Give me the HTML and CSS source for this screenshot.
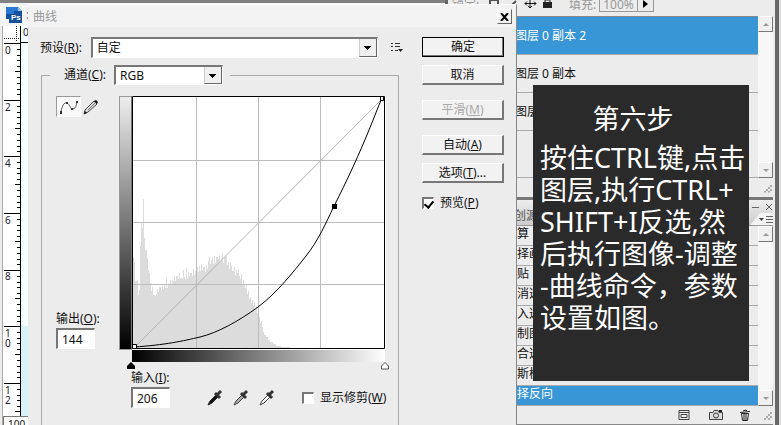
FILE: index.html
```
<!DOCTYPE html>
<html lang="zh-CN">
<head>
<meta charset="utf-8">
<title>曲线</title>
<link rel="stylesheet" href="styles.css">
</head>
<body>
<main class="workspace">
  <section class="document">
    <header class="doc-title">
      <svg width="17" height="17" viewBox="0 0 17 17"><path d="M0 0h12l4 4v12H3v-4H0z" fill="#164f9c"/><path d="M0 0h12v4H8v3H0z" fill="#2b78d2"/><path d="M12 0l4 4h-4z" fill="#9cc9ef"/><text x="5" y="13" class="ps">Ps</text></svg>
      <span>:</span>
    </header>
    <div class="doc-body">
      <svg class="ruler" width="28" height="390" viewBox="0 0 28 390">
        <defs>
          <path id="ticks" d="M4 .5h17M17 6.5h4M17 12.5h4M17 17.5h4M17 23.5h4M15 28.5h6M17 34.5h4M17 40.5h4M17 46.5h4M17 51.5h4" stroke="#000"/>
        </defs>
        <path d="M21 0h7v390h-7z" fill="#f5feff"/>
        <path d="M21 300h7v90h-7z" fill="#d9f2f5"/>
        <path d="M16.500 0v16M4 12.500h16" stroke="#222" stroke-dasharray="1 1"/>
        <path d="M20.500 0v390M20 16.500h8" stroke="#000"/>
        <use href="#ticks" y="17"/><use href="#ticks" y="74"/><use href="#ticks" y="130"/><use href="#ticks" y="187"/><use href="#ticks" y="244"/><use href="#ticks" y="300"/><use href="#ticks" y="357"/>
        <g class="ruler-text">
          <text x="23" y="10">0</text><text x="5" y="28">0</text><text x="5" y="85">2</text><text x="5" y="141">4</text><text x="5" y="198">6</text><text x="5" y="254">8</text>
          <text x="5" y="311">1</text><text x="5" y="321">0</text><text x="5" y="368">1</text><text x="5" y="378">2</text>
        </g>
      </svg>
      <div class="zoom-level">100</div>
    </div>
  </section>

  <aside class="panels">
    <section class="layers">
      <div class="layer-tools">
        <span>锁定:</span>
        <svg width="64" height="12" viewBox="0 0 64 12"><path d="M1 0h8v8H1zM20 8l7-7" fill="none" stroke="#555" stroke-width="2"/><path d="M41 0v8M36 3.500h11M39 6l2 2 2-2M38 1.500l-2 2 2 2M45 1.500l2 2-2 2" fill="none" stroke="#111"/><path d="M54 2h9v6h-9z" fill="#222"/><path d="M56 2V0h5v2" fill="none" stroke="#222"/></svg>
        <span class="fill-label">填充:</span>
        <span class="fill-value">100%</span><span class="fill-arrow"></span>
      </div>
      <div class="scroll-area">
        <ul class="layer-list">
          <li class="selected">图层 0 副本 2</li>
          <li>图层 0 副本</li>
          <li>图层 0</li>
          <li></li>
        </ul>
        <div class="scrollbar"><i class="arrow up"></i><i class="arrow down"></i></div>
      </div>
      <div class="panel-foot"><i class="grip"></i></div>
    </section>
    <section class="history">
      <header class="tabs">
        <span class="tab">创源</span>
        <svg width="22" height="23" viewBox="0 0 22 23"><path d="M0 22L9 11h13v12H0z" fill="#f4f4f4"/><path d="M1 5.500h7M15 2l6 6M21 2l-6 6M15 14.500h7M15 17.500h7M15 20.500h7" stroke="#666"/><path d="M8 16h5l-2.500 3z" fill="#444"/></svg>
      </header>
      <div class="scroll-area">
        <ul class="history-list">
          <li>算</li><li>择画</li><li>贴</li><li>消选</li><li>入选</li><li>制图</li><li>合选</li><li>斯模</li><li class="selected">择反向</li>
        </ul>
        <div class="scrollbar"><i class="arrow up"></i><i class="arrow down"></i></div>
      </div>
      <footer class="panel-foot actions">
        <svg width="12" height="12" viewBox="0 0 12 12"><path d="M1 1.500h10v9H1zM3 5.500h6v3H3zM1 3.500h10" fill="none" stroke="#444"/></svg>
        <svg width="14" height="12" viewBox="0 0 14 12"><path d="M.5 3.500H4l1-2h4l1 2h3.500v7H.5z" fill="#ddd" stroke="#444"/><circle cx="7" cy="6.500" r="2.500" fill="none" stroke="#333"/><path d="M10 2h3" stroke="#222" stroke-width="2"/></svg>
        <svg width="10" height="12" viewBox="0 0 10 12"><path d="M1.500 4.500l1 7h5l1-7zM4 5v6M6 5v6M0 3.500l10-1M3 2l3-1 1 1" fill="none" stroke="#222"/></svg>
        <i class="grip"></i>
      </footer>
    </section>
  </aside>
</main>

<form class="dialog">
  <header class="dialog-title">
    <h1>曲线</h1>
    <button type="button" class="close" aria-label="关闭"><svg width="9" height="8" viewBox="0 0 9 8"><path d="M1 0l7 8M8 0L1 8" stroke="#000" stroke-width="2"/></svg></button>
  </header>
  <div class="dialog-body">
    <div class="settings">
      <div class="preset">
        <label for="preset">预设(<u>R</u>):</label>
        <span class="select wide"><select id="preset"><option>自定</option></select></span>
        <svg width="13" height="11" viewBox="0 0 13 11"><path d="M0 1.500h2M0 4.500h2M0 8.500h2M4 1.500h5M4 4.500h5M4 8.500h3" stroke="#333"/><path d="M7 7h5l-2.500 3z" fill="#222"/></svg>
      </div>
      <fieldset>
        <legend><label for="channel">通道(<u>C</u>):</label><span class="select"><select id="channel"><option>RGB</option></select></span></legend>
        <div class="curves">
          <div class="side">
            <div class="tools">
              <button type="button" class="curve-tool" aria-label="曲线"><svg width="20" height="16" viewBox="0 0 20 16"><path d="M2 13C3 7 5 3 8 4S11 11 14 10S17 7 18 3" fill="none" stroke="#555"/><path d="M1 12h2v3H1zM7 3h2v2H7zM12 9h2v2h-2zM17 2h2v2h-2z" fill="#333"/></svg></button>
              <button type="button" class="pencil" aria-label="铅笔"><svg width="16" height="16" viewBox="0 0 16 16"><path d="M2 11L11 2l3 3-9 8-4 2z" fill="#ddd" stroke="#444"/><path d="M11 2l3 3 1-2-2-2zM1 15l1-3 2 2z" fill="#111"/><path d="M5 11l7-7" stroke="#777"/></svg></button>
            </div>
            <div class="field">
              <label for="output">输出(<u>O</u>):</label>
              <input id="output" type="text" value="144">
            </div>
          </div>
          <div class="plot">
            <div class="plot-row">
              <div class="scale-y"></div>
              <svg class="graph" width="254" height="254" viewBox="132 96 254 254">
                <path d="M132 96h254v254H132z" fill="#fff"/>
                <path d="M133 349V257H134V262H135V281H137V280H138V295H139V290H140V246H141V222H142V228H143V199H144V238H145V250H147V258H148V270H149V273H150V283H151V291H152V287H153V295H155V296H156V294H157V289H158V292H159V287H161V290H162V286H163V289H164V285H165V288H166V277H167V288H168V285H170V280H171V285H172V280H173V281H174V276H175V281H176V276H178V279H179V273H180V278H182V279H183V270H184V277H185V279H186V268H187V278H188V272H189V276H190V273H192V276H193V269H194V275H195V271H196V273H197V267H198V272H199V266H200V271H201V264H202V270H203V267H205V272H206V265H207V269H208V261H209V257H210V264H211V260H212V257H213V264H214V256H215V263H216V257H218V259H219V255H220V261H221V259H222V253H223V263H224V257H226V256H227V265H228V262H229V269H230V262H231V266H232V271H234V267H235V275H236V270H237V273H238V269H239V276H240V279H241V274H242V284H243V280H244V285H245V288H246V285H247V294H248V291H249V299H250V297H251V303H252V300H253V306H254V302H255V310H256V306H257V313H258V309H259V317H260V323H261V321H262V327H263V332H264V335H266V337H268V340H270V342H273V344H276V346H281V347H290V348H302V349z" fill="#dcdcdc"/>
                <path d="M196.500 97v252M258.500 97v252M320.500 97v252M133 160.500h252M133 222.500h252M133 284.500h252" stroke="#bcbcbc"/>
                <path d="M134 348L383 98" stroke="#b5b5b5"/>
                <path d="M134 347C165 345 183 341 200 337S239 321 258 307S294 271 306 256S326 223 334 206C346 183 361 150 369 130C374 118 378 107 382 98" fill="none" stroke="#000"/>
                <path d="M132.500 344.500h4v4h-4zM380.500 96.500h3v4h-3z" fill="#fff" stroke="#000"/>
                <path d="M332 204h5v5h-5z"/>
                <path d="M132.500 96.500h252v252h-252z" fill="none" stroke="#000"/>
              </svg>
            </div>
            <div class="scale-x"></div>
            <svg class="markers" viewBox="0 0 262 8" width="262" height="8"><path d="M0 7V4l4-4 4 4v3z"/><path d="M254.500 7V4L258 .5l3.500 3.500v3z" fill="#fff" stroke="#555"/></svg>
            <div class="below">
              <div class="field">
                <label for="input">输入(<u>I</u>):</label>
                <input id="input" type="text" value="206">
              </div>
              <div class="droppers">
                <svg width="17" height="17" viewBox="0 0 17 17"><path d="M1 16l2-4 6-6 2 2-6 6z" fill="#111" stroke="#222"/><path d="M8 4l5 5M10 6l4-4" stroke="#333" stroke-width="3"/></svg>
                <svg width="17" height="17" viewBox="0 0 17 17"><path d="M1 16l2-4 6-6 2 2-6 6z" fill="#aaa" stroke="#444"/><path d="M8 4l5 5M10 6l4-4" stroke="#333" stroke-width="3"/></svg>
                <svg width="17" height="17" viewBox="0 0 17 17"><path d="M1 16l2-4 6-6 2 2-6 6z" fill="#fff" stroke="#444"/><path d="M8 4l5 5M10 6l4-4" stroke="#333" stroke-width="3"/></svg>
              </div>
              <label class="check"><input type="checkbox"><span>显示修剪(<u>W</u>)</span></label>
            </div>
          </div>
        </div>
      </fieldset>
    </div>
    <div class="commands">
      <button type="button" class="default">确定</button>
      <button type="button">取消</button>
      <button type="button" class="spaced" disabled>平滑(<u>M</u>)</button>
      <button type="button" class="spaced">自动(<u>A</u>)</button>
      <button type="button">选项(<u>T</u>)...</button>
      <label class="check"><input type="checkbox" checked><span>预览(<u>P</u>)</span></label>
    </div>
  </div>
</form>

<article class="note">
  <h2>第六步</h2>
  <p>按住CTRL键,点击<br>图层,执行CTRL+<br>SHIFT+I反选,然<br>后执行图像-调整<br>-曲线命令，参数<br>设置如图。</p>
</article>
</body>
</html>
```
FILE: styles.css
```
* { box-sizing: border-box; }
body {
  margin: 0;
  height: 100vh;
  overflow: hidden;
  position: relative;
  background: #ececec;
  color: #111;
  font: 12px/16px "Noto Sans", "Noto Sans CJK SC", sans-serif;
}
h1, h2, p, ul { margin: 0; padding: 0; font-weight: normal; }
ul { list-style: none; }
svg { display: block; flex: none; }
button, input, select { font: inherit; color: inherit; border-radius: 0; }

.workspace { display: flex; height: 100%; border-right: 2px solid #ddd; }
.document { flex: 1; min-width: 0; border-top: 3px solid #808080; overflow: hidden; }
.doc-title { display: flex; gap: 3px; height: 23px; padding: 4px 0 0 6px; background: #f4f4f4; color: #777; }
.ps { font: bold 8px "Liberation Sans", sans-serif; fill: #fff; }
.doc-body { margin-left: 2px; border-left: 1px solid #aaa; background: #fff; }
.ruler { margin-left: -3px; }
.ruler-text { font: 10px "Noto Sans", sans-serif; fill: #223; }
.zoom-level { width: 60px; padding-left: 4px; border: 1px solid #777; font-size: 10px; line-height: 14px; }

.panels { display: flex; flex-direction: column; width: 334px; padding-right: 2px; border-left: 3px solid #666; border-right: 4px solid #696969; background: #ececec; }
.layers { flex: none; border-bottom: 3px solid #777; }
.layer-tools { display: flex; height: 16px; overflow: hidden; padding-left: 4px; color: #999; line-height: 10px; }
.layer-tools svg { margin-left: 5px; }
.layer-tools span:first-child { width: 32px; }
.fill-label { margin-left: 16px; }
.fill-value { margin-left: 3px; width: 39px; height: 12px; padding-left: 3px; border: 1px solid #999; border-top: 0; line-height: 9px; }
.fill-arrow { width: 16px; height: 12px; border: 1px solid #999; border-width: 0 1px 1px 0; padding: 0 0 0 5px; }
.fill-arrow::before { content: ""; display: block; border: 4px solid transparent; border-left: 5px solid #000; border-right: 0; }
.scroll-area { display: flex; }
.scroll-area ul { flex: 1; }
.layer-list { border-top: 1px solid #888; }
.layer-list li { height: 38px; padding: 11px 0 0 67px; border-bottom: 1px solid #aaa; }
.layer-list li:last-child { height: 47px; }
.selected { background: #3896d6; color: #fff; }
.scrollbar { display: flex; flex-direction: column; justify-content: space-between; width: 15px; background: #f7f7f7; }
.arrow { display: grid; place-items: center; height: 16px; background: #f0f0f0; border: 1px solid #fff; border-right-color: #777; border-bottom-color: #777; }
.arrow::before { content: ""; border: 3px solid transparent; }
.arrow.up::before { border-bottom-color: #999; border-top: 0; }
.arrow.down::before { border-top-color: #999; border-bottom: 0; }
.panel-foot { display: flex; justify-content: flex-end; align-items: center; height: 19px; padding: 0 1px; }
.grip { width: 10px; height: 10px; background: repeating-conic-gradient(#aaa 0 25%, #eee 0 50%) 0 0 / 4px 4px; clip-path: polygon(100% 0, 100% 100%, 0 100%); }
.history { flex: 1; }
.tabs { display: flex; justify-content: space-between; height: 26px; padding: 2px 0 0 66px; background: linear-gradient(#eee, #ccc); border-bottom: 1px solid #999; color: #555; }
.tab { padding-top: 6px; }
.history-list li { height: 20px; padding: 0 0 0 69px; border-bottom: 1px solid #aaa; }
.actions { gap: 26px; border-bottom: 1px solid #888; }
.actions svg:nth-child(2) { margin-left: -7px; }
.actions svg:nth-child(3) { margin-left: -9px; }
.actions .grip { margin-left: -14px; }

.dialog { position: absolute; top: 4px; left: 28px; width: 489px; height: 100%; background: #ececec; border-right: 1px solid #888; border-top: 1px solid #fff; }
.dialog-title { display: flex; justify-content: space-between; height: 22px; padding: 4px 4px 0 5px; background: #f3f3f3; color: #999; }
.dialog-title h1 { font-size: 12px; line-height: 16px; }
.close { display: grid; place-items: center; width: 15px; height: 15px; padding: 0; background: #f2f2f2; border: 1px solid #fff; border-right-color: #666; border-bottom-color: #666; }
.dialog-body { display: flex; justify-content: space-between; padding: 10px 12px 0; }
.settings { width: 364px; }
.preset { display: flex; align-items: center; height: 21px; }
.preset label { width: 51px; }
.preset svg { margin-left: 13px; }
.select { position: relative; display: block; width: 109px; height: 20px; }
.select.wide { width: 288px; height: 21px; }
.select select { display: block; width: 100%; height: 100%; padding: 0 20px 0 4px; appearance: none; background: #fff; border: 1px solid #fff; border-top: 2px solid #777; border-left: 2px solid #777; }
.select::after { content: ""; position: absolute; top: 2px; right: 1px; bottom: 1px; width: 16px; pointer-events: none; border-right: 1px solid #666; border-bottom: 1px solid #666; border-left: 1px solid #ccc; background: linear-gradient(#000, #000) 4px 7px / 7px 1px no-repeat, linear-gradient(#000, #000) 5px 8px / 5px 1px no-repeat, linear-gradient(#000, #000) 6px 9px / 3px 1px no-repeat, linear-gradient(#000, #000) 7px 10px / 1px 1px no-repeat, #f0f0f0; }
fieldset { width: 358px; min-width: 0; height: 370px; margin: 7px 0 0 1px; padding: 0 0 0 14px; border: 1px solid #aaa; }
legend { display: flex; align-items: center; width: 180px; margin-left: -6px; padding: 0 0 0 14px; }
legend label { width: 50px; }
.curves { display: flex; padding-top: 11px; }
.side { display: flex; flex-direction: column; justify-content: space-between; width: 63px; height: 253px; }
.tools { display: flex; gap: 2px; }
.tools button { padding: 0; border: 0; background: none; }
.tools .curve-tool { width: 25px; height: 21px; padding: 1px 2px; background: #fafafa; border: 1px solid #999; border-right-color: #fff; border-bottom-color: #fff; }
.field { display: flex; flex-direction: column; gap: 1px; }
.field input { width: 39px; height: 21px; padding: 0 0 0 4px; background: #fff; border: 1px solid #fff; border-top: 2px solid #777; border-left: 2px solid #777; }
.plot-row { display: flex; }
.scale-y { width: 13px; height: 254px; background: linear-gradient(#eee, #000); border: 1px solid #999; border-right-color: #777; }
.scale-x { width: 253px; height: 12px; margin-left: 13px; background: linear-gradient(90deg, #000, #fff); }
.markers { margin-left: 8px; }
.below { display: flex; align-items: flex-end; margin-left: 12px; }
.droppers { display: flex; gap: 9px; margin: 0 26px 2px 37px; }
.check { display: flex; align-items: center; gap: 6px; height: 20px; white-space: nowrap; }
.check input { appearance: none; flex: none; width: 12px; height: 12px; margin: 0; background: #fff; border: 1px solid #fff; border-top: 2px solid #777; border-left: 2px solid #777; }
.check input:checked::after { content: ""; display: block; width: 4px; height: 7px; margin-left: 2px; border: solid #000; border-width: 0 2px 2px 0; transform: rotate(40deg); }
.commands { display: flex; flex-direction: column; gap: 8px; width: 82px; }
.commands button { height: 20px; padding: 0; background: #f2f2f2; border: 1px solid #fff; border-right: 2px solid #777; border-bottom: 2px solid #777; line-height: 16px; }
.commands .default { border: 1px solid #000; box-shadow: inset -1px -1px #777; }
.commands .spaced { margin-top: 7px; }
.commands button:disabled { color: #aaa; }
.commands .check { margin-top: 2px; }

.note { position: absolute; top: 85px; left: 533px; width: 216px; padding: 18px 7px 47px; background: #2a2a2a; color: #fff; font-size: 27px; line-height: 32px; }
.note h2 { padding-right: 16px; font-size: 27px; text-align: center; }
.note p { margin-top: 7px; white-space: nowrap; }
```
